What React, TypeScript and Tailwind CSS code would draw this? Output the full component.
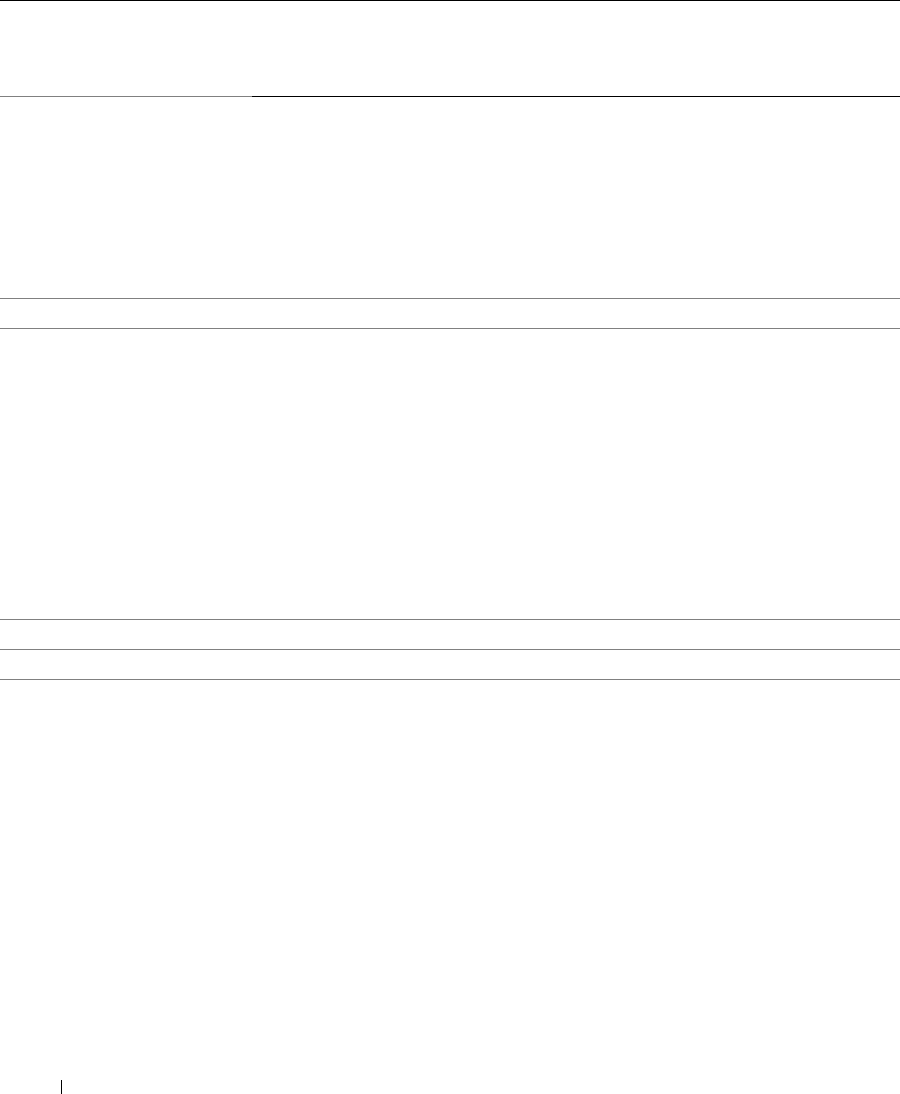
import React from "react";

function Rule() {
  return <div className="h-px w-full bg-[#808080]" />;
}

export default function App() {
  return (
    <div className="w-[900px] h-[1094px] bg-white overflow-hidden font-['Liberation_Sans',sans-serif]">
      <div className="h-px w-full bg-black" />
      <div className="h-[95px]" />
      <div className="flex h-px w-full">
        <div className="w-[252px] bg-[#808080]" />
        <div className="flex-1 bg-black" />
      </div>
      <div className="h-[201px]" />
      <Rule />
      <div className="h-[29px]" />
      <Rule />
      <div className="h-[290px]" />
      <Rule />
      <div className="h-[29px]" />
      <Rule />
      <div className="h-[29px]" />
      <Rule />
      <div className="h-[400px]" />
      <div className="ml-[61px] w-px h-[14px] bg-black" />
    </div>
  );
}
